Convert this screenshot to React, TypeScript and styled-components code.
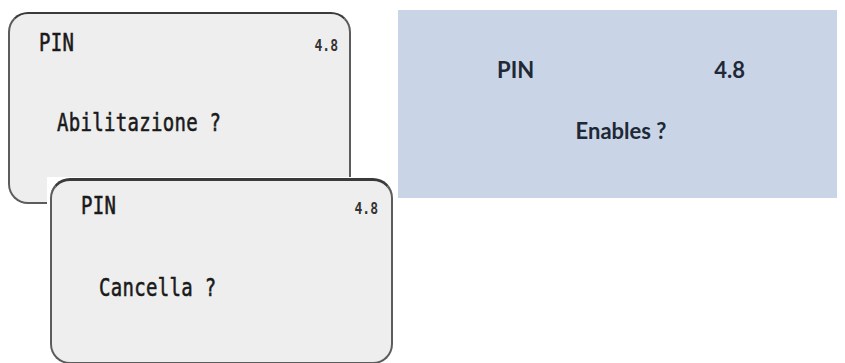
import React from 'react';
import styled, { createGlobalStyle } from 'styled-components';

const GlobalStyle = createGlobalStyle`
  html, body {
    margin: 0;
    padding: 0;
    background: #ffffff;
  }
  body {
    width: 845px;
    height: 363px;
    overflow: hidden;
    font-family: "DejaVu Sans Mono", monospace;
  }
`;

const Page = styled.div`
  display: flex;
  align-items: flex-start;
  width: 845px;
  height: 363px;
`;

const LeftColumn = styled.div`
  display: flex;
  flex-direction: column;
  width: 398px;
  padding: 12px 0 0 8px;
  box-sizing: border-box;
`;

const Screen = styled.div<{ $w: number; $h: number; $topBorder: number }>`
  width: ${(p) => p.$w}px;
  height: ${(p) => p.$h}px;
  box-sizing: border-box;
  background: #eeeeee;
  border: 2px solid #5c5c5c;
  border-top: ${(p) => p.$topBorder}px solid #3a3a3a;
  border-radius: 20px;
  color: #1a1a1a;
`;

const OverlayMat = styled.div`
  margin: -27px 0 0 39px;
  padding: 1px 5px 0 3px;
  background: #ffffff;
  width: 351px;
  box-sizing: border-box;
  position: relative;
`;

const ScreenHeader = styled.div<{ $top: number; $right: number }>`
  display: flex;
  justify-content: space-between;
  align-items: baseline;
  padding: ${(p) => p.$top}px ${(p) => p.$right}px 0 29px;
`;

const MonoLine = styled.span`
  display: inline-block;
  font-size: 19px;
  line-height: 24px;
  white-space: pre;
  letter-spacing: 0.3px;
  -webkit-text-stroke: 0.45px #1a1a1a;
  transform: scaleY(1.3);
  transform-origin: 0 78%;
`;

const Version = styled.span`
  display: inline-block;
  font-size: 13px;
  font-weight: bold;
  line-height: 24px;
  color: #333333;
  transform: scaleY(1.15);
  transform-origin: 0 78%;
`;

const Prompt = styled.div<{ $gap: number }>`
  margin-top: ${(p) => p.$gap}px;
  padding-left: 47px;
`;

const TranslationPanel = styled.div`
  margin-top: 10px;
  width: 439px;
  height: 188px;
  background: #c9d5e6;
  font-family: Lato, "Open Sans", sans-serif;
  font-weight: bold;
  font-size: 22px;
  line-height: 26px;
  color: #1f2836;
  padding-top: 47px;
  box-sizing: border-box;
`;

const PanelHeader = styled.div`
  display: flex;
  justify-content: center;
  gap: 180px;
  padding-left: 7px;
`;

const PanelPrompt = styled.div`
  margin-top: 35px;
  text-align: center;
  padding-left: 7px;
`;

export default function App() {
  return (
    <>
      <GlobalStyle />
      <Page>
        <LeftColumn>
          <Screen $w={343} $h={192} $topBorder={2}>
            <ScreenHeader $top={18} $right={11}>
              <MonoLine>PIN</MonoLine>
              <Version>4.8</Version>
            </ScreenHeader>
            <Prompt $gap={53}>
              <MonoLine>Abilitazione ?</MonoLine>
            </Prompt>
          </Screen>
          <OverlayMat>
            <Screen $w={343} $h={186} $topBorder={3}>
              <ScreenHeader $top={14} $right={13}>
                <MonoLine>PIN</MonoLine>
                <Version>4.8</Version>
              </ScreenHeader>
              <Prompt $gap={55}>
                <MonoLine>Cancella ?</MonoLine>
              </Prompt>
            </Screen>
          </OverlayMat>
        </LeftColumn>
        <TranslationPanel>
          <PanelHeader>
            <span>PIN</span>
            <span>4.8</span>
          </PanelHeader>
          <PanelPrompt>Enables ?</PanelPrompt>
        </TranslationPanel>
      </Page>
    </>
  );
}
